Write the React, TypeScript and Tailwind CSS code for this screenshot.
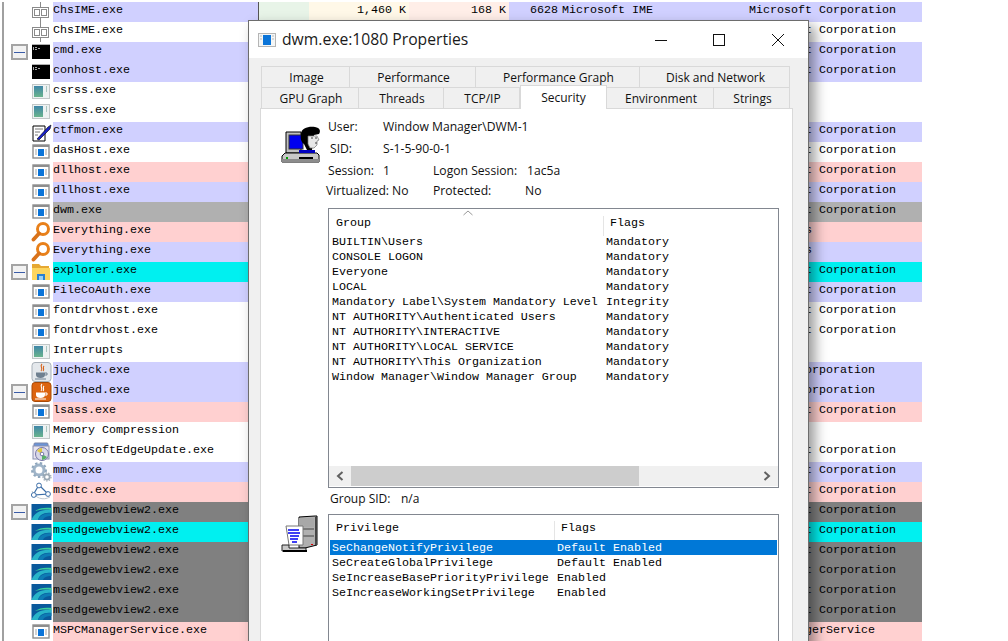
import type { ReactNode } from "react";

type Kind = "tree" | "cmd" | "sys" | "pen" | "app" | "search" | "folder" | "javaLight" | "javaOrange" | "cd" | "gear" | "net" | "edge";

type Row = { name: string; color: string; icon: Kind; open?: boolean; company?: string };

const LAV = "bg-[#d0d0ff]";
const PINK = "bg-[#ffd0d0]";
const WHITE = "bg-white";
const CYAN = "bg-[#00f0f0]";
const DARK = "bg-[#808080]";
const MS = "Microsoft Corporation";

const rows: Row[] = [
  { name: "ChsIME.exe", color: LAV, icon: "tree", company: MS },
  { name: "ChsIME.exe", color: WHITE, icon: "tree", company: MS },
  { name: "cmd.exe", color: LAV, icon: "cmd", open: true, company: MS },
  { name: "conhost.exe", color: LAV, icon: "cmd", company: MS },
  { name: "csrss.exe", color: WHITE, icon: "sys" },
  { name: "csrss.exe", color: WHITE, icon: "sys" },
  { name: "ctfmon.exe", color: LAV, icon: "pen", company: MS },
  { name: "dasHost.exe", color: WHITE, icon: "app", company: MS },
  { name: "dllhost.exe", color: PINK, icon: "app", company: MS },
  { name: "dllhost.exe", color: LAV, icon: "app", company: MS },
  { name: "dwm.exe", color: "bg-[#b0b0b0]", icon: "app", company: MS },
  { name: "Everything.exe", color: PINK, icon: "search", company: "voidtools" },
  { name: "Everything.exe", color: LAV, icon: "search", company: "voidtools" },
  { name: "explorer.exe", color: CYAN, icon: "folder", open: true, company: MS },
  { name: "FileCoAuth.exe", color: LAV, icon: "app", company: MS },
  { name: "fontdrvhost.exe", color: WHITE, icon: "app", company: MS },
  { name: "fontdrvhost.exe", color: WHITE, icon: "app", company: MS },
  { name: "Interrupts", color: WHITE, icon: "sys" },
  { name: "jucheck.exe", color: LAV, icon: "javaLight", company: "Oracle Corporation" },
  { name: "jusched.exe", color: LAV, icon: "javaOrange", open: true, company: "Oracle Corporation" },
  { name: "lsass.exe", color: PINK, icon: "app", company: MS },
  { name: "Memory Compression", color: WHITE, icon: "sys" },
  { name: "MicrosoftEdgeUpdate.exe", color: WHITE, icon: "cd", company: MS },
  { name: "mmc.exe", color: LAV, icon: "gear", company: MS },
  { name: "msdtc.exe", color: PINK, icon: "net", company: MS },
  { name: "msedgewebview2.exe", color: DARK, icon: "edge", open: true, company: MS },
  { name: "msedgewebview2.exe", color: CYAN, icon: "edge", company: MS },
  { name: "msedgewebview2.exe", color: DARK, icon: "edge", company: MS },
  { name: "msedgewebview2.exe", color: DARK, icon: "edge", company: MS },
  { name: "msedgewebview2.exe", color: DARK, icon: "edge", company: MS },
  { name: "msedgewebview2.exe", color: DARK, icon: "edge", company: MS },
  { name: "MSPCManagerService.exe", color: PINK, icon: "app", company: "MSPCManagerService" },
];

const groups = [
  ["BUILTIN\\Users", "Mandatory"],
  ["CONSOLE LOGON", "Mandatory"],
  ["Everyone", "Mandatory"],
  ["LOCAL", "Mandatory"],
  ["Mandatory Label\\System Mandatory Level", "Integrity"],
  ["NT AUTHORITY\\Authenticated Users", "Mandatory"],
  ["NT AUTHORITY\\INTERACTIVE", "Mandatory"],
  ["NT AUTHORITY\\LOCAL SERVICE", "Mandatory"],
  ["NT AUTHORITY\\This Organization", "Mandatory"],
  ["Window Manager\\Window Manager Group", "Mandatory"],
];

const privileges = [
  ["SeChangeNotifyPrivilege", "Default Enabled"],
  ["SeCreateGlobalPrivilege", "Default Enabled"],
  ["SeIncreaseBasePriorityPrivilege", "Enabled"],
  ["SeIncreaseWorkingSetPrivilege", "Enabled"],
];

const tabsTop = [
  { label: "Image", w: "w-[89px]" },
  { label: "Performance", w: "w-[126px]" },
  { label: "Performance Graph", w: "w-[164px]" },
  { label: "Disk and Network", w: "w-[150px]" },
];

const tabsBottom = [
  { label: "GPU Graph", w: "w-[98px]" },
  { label: "Threads", w: "w-[85px]" },
  { label: "TCP/IP", w: "w-[76px]" },
  { label: "Security", w: "w-[87px]", active: true },
  { label: "Environment", w: "w-[107px]" },
  { label: "Strings", w: "w-[76px]" },
];

function ProcIcon({ kind }: { kind: Kind }) {
  let body: ReactNode = null;
  if (kind === "tree") {
    body = (
      <g fill="#fff" stroke="#8a8a8a">
        <path d="M9.5 0V20" />
        <rect x="1.5" y="5.5" width="16" height="10" />
        <rect x="3.5" y="7.5" width="5" height="6" />
        <rect x="10.5" y="7.5" width="5" height="6" />
      </g>
    );
  } else if (kind === "cmd") {
    body = (
      <g>
        <rect x="1" y="2" width="18" height="15" fill="#000" />
        <rect x="1" y="2" width="18" height="1" fill="#b0b0b0" />
        <path d="M2 5H3V8H2ZM4 5H6V6H4ZM4 7H6V8H4ZM7 6H9V7H7Z" fill="#a8a8a8" />
      </g>
    );
  } else if (kind === "sys") {
    body = (
      <g>
        <defs>
          <linearGradient id="sysFill" x1="0" y1="0" x2="0" y2="1">
            <stop offset="0" stopColor="#3f86a8" />
            <stop offset="1" stopColor="#6ab48c" />
          </linearGradient>
        </defs>
        <rect x="1.5" y="2.5" width="17" height="14" fill="#eef2f2" stroke="#c2c8c8" />
        <rect x="3" y="4" width="9" height="11" fill="url(#sysFill)" />
        <rect x="15" y="4" width="1" height="6" fill="#a9c7c0" />
      </g>
    );
  } else if (kind === "pen") {
    body = (
      <g>
        <path d="M2 4H14V19H2Z" fill="#fff" stroke="#000" />
        <path d="M4 7H12M4 10H9M4 13H7" stroke="#777" />
        <path d="M6 17L17 5L20 3L19 7L8 18Z" fill="#1a22c8" stroke="#000" strokeWidth="0.6" />
      </g>
    );
  } else if (kind === "app") {
    body = (
      <g>
        <rect x="2" y="3" width="16" height="13" fill="#fff" stroke="#8e8e8e" strokeWidth="1.4" />
        <rect x="2" y="3" width="16" height="2" fill="#8e8e8e" />
        <rect x="7" y="7" width="6" height="7" fill="#0a74d8" />
        <path d="M4 8H6M4 10H6M4 12H6M14 8H16M14 10H16M14 12H16" stroke="#a5a5a5" />
      </g>
    );
  } else if (kind === "search") {
    body = (
      <g fill="none" stroke="#e8801a">
        <circle cx="12" cy="7" r="5.5" strokeWidth="3" fill="#fff" />
        <path d="M8 11.5L2.5 17.5" strokeWidth="3.8" strokeLinecap="round" stroke="#d9721a" />
      </g>
    );
  } else if (kind === "folder") {
    body = (
      <g>
        <path d="M1 2H8L10 4H18V8H1Z" fill="#e6a832" />
        <rect x="1" y="6" width="18" height="12" fill="#fcd55e" />
        <path d="M6 18V12H14V18H12V14H8V18Z" fill="#2a7fd0" />
        <rect x="8" y="14" width="4" height="4" fill="#9bd0f0" />
      </g>
    );
  } else if (kind === "javaLight" || kind === "javaOrange") {
    const light = kind === "javaLight";
    body = (
      <g>
        <rect x="1" y="0.5" width="19" height="19" rx="3" fill={light ? "#e4e8ec" : "#dc6410"} stroke={light ? "#a8b0b8" : "#a84a08"} />
        <path d="M11 2C8 5 13 6 10 9M13 4C11 6 14 7 12 9" fill="none" stroke={light ? "#d8621a" : "#fff"} strokeWidth="1.1" />
        <path d="M5 10.5H14V13C14 15 12 16 9.5 16S5 15 5 13Z" fill={light ? "#6f8090" : "#fff"} />
        <path d="M14 11H16V13H14" fill="none" stroke={light ? "#6f8090" : "#fff"} />
        <path d="M4 17H15" stroke={light ? "#6f8090" : "#fff"} />
      </g>
    );
  } else if (kind === "cd") {
    body = (
      <g>
        <rect x="3" y="1" width="14" height="7" rx="1" fill="#6a94d8" stroke="#7a86a8" />
        <rect x="2" y="4" width="16" height="13" fill="#e8e4f0" stroke="#8890b0" />
        <circle cx="11" cy="12" r="6.5" fill="#d8d8e8" stroke="#7878a8" />
        <path d="M11 12L6 9A6 6 0 0 1 11 6Z" fill="#e0c840" />
        <path d="M11 12L16 15A6 6 0 0 1 11 18Z" fill="#58b068" />
        <circle cx="11" cy="12" r="1.8" fill="#fff" stroke="#7878a8" />
      </g>
    );
  } else if (kind === "gear") {
    body = (
      <g>
        <circle cx="8" cy="8" r="5" fill="none" stroke="#9fb4c8" strokeWidth="3" />
        <circle cx="8" cy="8" r="7" fill="none" stroke="#8ea6bc" strokeWidth="2" strokeDasharray="2.4 2.4" />
        <circle cx="16" cy="15" r="2.6" fill="none" stroke="#9aa8b4" strokeWidth="1.6" />
        <circle cx="16" cy="15" r="4" fill="none" stroke="#9aa8b4" strokeWidth="1.2" strokeDasharray="1.4 1.4" />
      </g>
    );
  } else if (kind === "net") {
    body = (
      <g>
        <path d="M8 3L17 12L2 13Z" fill="none" stroke="#3c6ea8" strokeWidth="1.2" />
        <path d="M1 9C4 16 12 19 19 15" fill="none" stroke="#c0c8d0" />
        <circle cx="8" cy="3.5" r="2.4" fill="#fff" stroke="#3c6ea8" />
        <circle cx="17" cy="12" r="2.4" fill="#fff" stroke="#3c6ea8" />
        <circle cx="2.8" cy="13" r="2.4" fill="#fff" stroke="#3c6ea8" />
      </g>
    );
  } else if (kind === "edge") {
    body = (
      <g>
        <rect x="0.5" y="2" width="20" height="16" fill="#0a5a9c" />
        <path d="M0.5 18C3 11 10 7 20.5 8V11C13 10 8 13 7 18Z" fill="#28b4c8" />
        <path d="M7 18C8 14 13 11 20.5 11V14C16 14 13 15 12 18Z" fill="#0e7cb4" />
        <path d="M4 9C8 6 14 5 20.5 6V8C13 7 8 8 4 9Z" fill="#3ccf9c" />
      </g>
    );
  }
  return (
    <svg width="21" height="20" viewBox="0 0 21 20" className="shrink-0">
      {body}
    </svg>
  );
}

function ProcessRow({ row, index }: { row: Row; index: number }) {
  const first = index === 0;
  return (
    <div className="flex h-5 w-[922px]">
      <div className="flex h-5 w-[53px] shrink-0 items-start">
        <div className="h-5 w-[11px] shrink-0 pl-[2px]">
          <div className="h-5 w-[2px] bg-[#a0a0a0]" />
        </div>
        <div className="h-5 w-[20px] shrink-0">
          {row.open && (
            <div className="mt-[2px] flex h-4 w-[17px] items-center justify-center border-2 border-[#a4a4a4] bg-[#f2f2f2]">
              <div className="h-px w-[11px] bg-[#3a5ca8]" />
            </div>
          )}
        </div>
        <ProcIcon kind={row.icon} />
      </div>
      <div className={`flex h-5 w-[869px] items-start text-black ${row.color}`}>
        <div className="w-[205px] shrink-0 leading-[16px]">{row.name}</div>
        {first ? (
          <div className="flex h-5 w-[491px] shrink-0 items-start leading-[16px]">
            <div className="h-5 w-[51px] border-l border-[#555] bg-[#e8f4e8]" />
            <div className="h-5 w-[100px] bg-[#fff8e8] pr-[3px] text-right">1,460 K</div>
            <div className="h-5 w-[100px] bg-[#ffeee8] pr-[3px] text-right">168 K</div>
            <div className="w-[49px] text-right">6628</div>
            <div className="w-[188px] pl-[4px]">Microsoft IME</div>
          </div>
        ) : (
          <div className="w-[491px] shrink-0" />
        )}
        <div className="leading-[16px]">{row.company}</div>
      </div>
    </div>
  );
}

function Tab({ label, w, active }: { label: string; w: string; active?: boolean }) {
  if (active) {
    return (
      <div className={`relative z-10 -mt-[2px] mb-[-1px] flex h-[24px] items-center justify-center border border-b-0 border-[#d9d9d9] bg-white ${w}`}>
        {label}
      </div>
    );
  }
  return (
    <div className={`flex h-[21px] items-center justify-center border-r border-t border-[#d9d9d9] bg-[#f0f0f0] pl-[2px] pt-[2px] first:border-l ${w}`}>
      {label}
    </div>
  );
}

function UserIcon() {
  return (
    <svg width="40" height="42" viewBox="0 0 40 42" className="shrink-0">
      <path d="M5 6H20V27H5Z" fill="#c0c0c0" stroke="#000" />
      <rect x="8" y="9" width="14" height="14" fill="#0000f0" stroke="#333" />
      <path d="M1 30L4 27H36L38 29V36H1Z" fill="#c8c8c8" stroke="#000" />
      <rect x="1" y="33" width="37" height="3" fill="#8c8c8c" />
      <rect x="5" y="31" width="2" height="2" fill="#00a000" />
      <rect x="18" y="31" width="14" height="2" fill="#000" />
      <path d="M18 24H34V27H18Z" fill="#0000c0" />
      <path d="M20 8C20 2 28 0 34 1C39 2 40 5 38 8L33 9L31 24L26 24L23 18C20 16 19 12 20 8Z" fill="#000" />
      <path d="M27 10H36L38 14L36 15L36 19L33 22H29L27 18Z" fill="#e8e8e8" stroke="#777" strokeWidth="0.7" />
      <path d="M30 12H32M34 12H36M34 17H36" stroke="#444" />
    </svg>
  );
}

function ServerIcon() {
  return (
    <svg width="38" height="40" viewBox="0 0 38 40" className="shrink-0">
      <path d="M18 2L34 1H36V30L24 33H18Z" fill="#b0b0b0" stroke="#000" />
      <rect x="18" y="3" width="15" height="9" fill="#a8a8a8" />
      <path d="M18 14H33M18 21H33" stroke="#444" />
      <rect x="34" y="2" width="2" height="28" fill="#444" />
      <rect x="30" y="29" width="2" height="1" fill="#e00000" />
      <path d="M5 11H22V30H8Z" fill="#fff" stroke="#777" />
      <path d="M7 15H18M7 18H19M9 21H18M9 24H17M11 27H16" stroke="#0000f0" strokeWidth="1.4" />
      <path d="M1 30H8V33H25V36H1Z" fill="#c8c8c8" stroke="#222" />
      <rect x="2" y="35" width="24" height="2" fill="#000" />
    </svg>
  );
}

function ListHead({ first, second, w, pad }: { first: string; second: string; w: string; pad: string }) {
  return (
    <div className={`flex h-[25px] shrink-0 items-start leading-[14px] ${pad}`}>
      <div className={`h-[20px] border-r border-[#e5e5e5] pl-[7px] ${w}`}>{first}</div>
      <div className="pl-[6px]">{second}</div>
    </div>
  );
}

export default function App() {
  return (
    <div className="relative h-[641px] w-[1008px] overflow-hidden bg-white font-['Liberation_Mono',monospace] text-[11.67px]">
      <div className="pt-[2px]">
        {rows.map((row, i) => (
          <ProcessRow key={i} row={row} index={i} />
        ))}
      </div>

      {/* properties dialog floats over the process list */}
      <div className="absolute left-[248px] top-[20px] h-[640px] w-[561px] border border-[#6d6d6d] bg-[#f0f0f0] font-['Open_Sans',sans-serif] text-[12px] text-[#111] shadow-[6px_6px_12px_rgba(0,0,0,0.4)]">
        <div className="flex h-[37px] items-center bg-white">
          <svg width="18" height="14" viewBox="0 0 18 14" className="ml-[9px] shrink-0">
            <rect x="0.5" y="0.5" width="17" height="13" fill="#f4f6f6" stroke="#b5b5b5" />
            <rect x="5" y="2" width="8" height="10" fill="#0a74d8" />
            <path d="M2 3H4M2 6H4M14 3H16M14 6H16" stroke="#bbb" />
          </svg>
          <div className="ml-[6px] text-[15.7px] leading-none text-[#1a1a1a]">dwm.exe:1080 Properties</div>
          <div className="ml-auto flex h-[37px] items-center">
            <svg width="14" height="14" viewBox="0 0 14 14" className="mr-[44px]">
              <path d="M1 7.5H13" stroke="#111" />
            </svg>
            <svg width="14" height="14" viewBox="0 0 14 14" className="mr-[45px]">
              <rect x="1.5" y="1.5" width="11" height="11" fill="none" stroke="#111" />
            </svg>
            <svg width="14" height="14" viewBox="0 0 14 14" className="mr-[23px]">
              <path d="M1 1L13 13M13 1L1 13" stroke="#111" />
            </svg>
          </div>
        </div>

        <div className="pl-[11px] pt-[8px]">
          <div className="flex pl-px">
            {tabsTop.map((t) => (
              <Tab key={t.label} label={t.label} w={t.w} />
            ))}
          </div>
          <div className="flex pl-px">
            {tabsBottom.map((t) => (
              <Tab key={t.label} label={t.label} w={t.w} active={t.active} />
            ))}
          </div>

          <div className="h-[540px] w-[533px] border border-[#d9d9d9] bg-white">
            <div className="flex h-[99px] items-start">
              <div className="w-[67px] shrink-0 pl-[20px] pt-[17px]">
                <UserIcon />
              </div>
              <div className="flex-1 pt-[9px] text-[12.15px] leading-[18px]">
                <div className="flex h-[22px]">
                  <div className="w-[55px]">User:</div>
                  <div>Window Manager\DWM-1</div>
                </div>
                <div className="flex h-[22px]">
                  <div className="w-[55px] pl-[2px]">SID:</div>
                  <div>S-1-5-90-0-1</div>
                </div>
                <div className="flex h-[20px]">
                  <div className="w-[55px]">Session:</div>
                  <div className="w-[50px]">1</div>
                  <div className="w-[94px]">Logon Session:</div>
                  <div>1ac5a</div>
                </div>
                <div className="-ml-[2px] flex h-[18px]">
                  <div className="w-[66px]">Virtualized:</div>
                  <div className="w-[41px]">No</div>
                  <div className="w-[92px]">Protected:</div>
                  <div>No</div>
                </div>
              </div>
            </div>

            <div className="ml-[67px] flex h-[280px] w-[451px] flex-col border border-[#828790] bg-white font-['Liberation_Mono',monospace] text-[11.67px] text-black">
              <div className="relative">
                <ListHead first="Group" second="Flags" w="w-[275px]" pad="pt-[7px]" />
                <svg width="10" height="6" viewBox="0 0 10 6" className="absolute left-[134px] top-[1px]">
                  <path d="M0.5 5L5 1L9.5 5" fill="none" stroke="#999" />
                </svg>
              </div>
              <div className="flex-1 pl-[3px]">
                {groups.map(([g, f]) => (
                  <div key={g} className="flex h-[15px] pt-px leading-[15px]">
                    <div className="w-[274px] whitespace-pre">{g}</div>
                    <div>{f}</div>
                  </div>
                ))}
              </div>
              <div className="mb-px flex h-5 items-center bg-[#f0f0f0]">
                <div className="flex h-5 w-[22px] items-center justify-center">
                  <svg width="8" height="10" viewBox="0 0 8 10">
                    <path d="M6.5 1L2 5L6.5 9" fill="none" stroke="#606060" strokeWidth="2" />
                  </svg>
                </div>
                <div className="h-5 w-[288px] bg-[#cdcdcd]" />
                <div className="ml-auto flex h-5 w-[22px] items-center justify-center">
                  <svg width="8" height="10" viewBox="0 0 8 10">
                    <path d="M1.5 1L6 5L1.5 9" fill="none" stroke="#606060" strokeWidth="2" />
                  </svg>
                </div>
              </div>
            </div>

            <div className="ml-[69px] h-[21px] pt-px leading-[20px]">
              <span className="inline-block w-[71px]">Group SID:</span>n/a
            </div>

            <div className="mt-[5px] flex items-start">
              <div className="w-[67px] shrink-0 pl-[20px] pt-px">
                <ServerIcon />
              </div>
              <div className="flex h-[140px] w-[451px] flex-col border border-[#828790] bg-white font-['Liberation_Mono',monospace] text-[11.67px] text-black">
                <ListHead first="Privilege" second="Flags" w="w-[226px]" pad="pt-[6px]" />
                <div className="pl-px pr-px">
                  {privileges.map(([p, f], i) => (
                    <div key={p} className={`flex h-[15px] pl-[2px] pt-px leading-[15px] ${i === 0 ? "bg-[#0078d7] text-white" : ""}`}>
                      <div className="w-[225px]">{p}</div>
                      <div>{f}</div>
                    </div>
                  ))}
                </div>
              </div>
            </div>
          </div>
        </div>
      </div>
    </div>
  );
}
